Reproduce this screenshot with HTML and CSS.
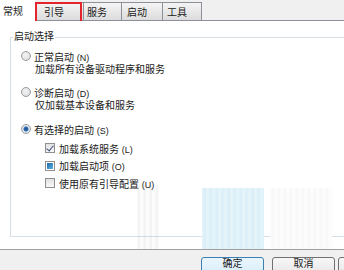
FILE: index.html
```html
<!DOCTYPE html>
<html lang="zh-CN">
<head>
    <meta charset="UTF-8">
    <title>系统配置</title>
    <link rel="stylesheet" href="styles.css">
</head>
<body>
    <div class="dialog">
        <div class="tabs">
            <div class="tab active">常规</div>
            <div class="tab marked">引导</div>
            <div class="tab w-services">服务</div>
            <div class="tab w-startup">启动</div>
            <div class="tab w-tools">工具</div>
        </div>

        <div class="panel">
            <fieldset class="group">
                <legend>启动选择</legend>

                <div class="option first">
                    <span class="radio"></span>
                    <span>正常启动 <span class="key">(N)</span></span>
                </div>
                <div class="desc">加载所有设备驱动程序和服务</div>

                <div class="option second">
                    <span class="radio"></span>
                    <span>诊断启动 <span class="key">(D)</span></span>
                </div>
                <div class="desc">仅加载基本设备和服务</div>

                <div class="option third">
                    <span class="radio checked"></span>
                    <span>有选择的启动 <span class="key">(S)</span></span>
                </div>

                <div class="sub">
                    <div class="check-row">
                        <span class="check ticked"></span>
                        <span>加载系统服务 <span class="key">(L)</span></span>
                    </div>
                    <div class="check-row">
                        <span class="check filled"></span>
                        <span>加载启动项 <span class="key">(O)</span></span>
                    </div>
                    <div class="check-row">
                        <span class="check"></span>
                        <span>使用原有引导配置 <span class="key">(U)</span></span>
                    </div>
                </div>
            </fieldset>

            <!-- полосы от растянутого скриншота -->
            <div class="smear smear-gray"></div>
            <div class="smear smear-blue"></div>
            <div class="smear smear-white"></div>
        </div>

        <div class="footer">
            <button class="btn default">确定</button>
            <button class="btn">取消</button>
            <button class="btn stub"></button>
        </div>
    </div>
</body>
</html>
```

FILE: styles.css
```css
html, body {
    margin: 0;
    padding: 0;
}
body {
    width: 344px;
    height: 270px;
    overflow: hidden;
    background: #f0f0f0;
    font-family: "Liberation Sans", "Noto Sans CJK SC", sans-serif;
    font-size: 10px;
    color: #1a1a1a;
}
.dialog {
    display: flex;
    flex-direction: column;
    width: 344px;
}
.tabs {
    display: flex;
    align-items: flex-end;
    height: 20px;
    border-bottom: 1px solid #8d9099;
    background: #f0f0f0;
}
.tab {
    box-sizing: border-box;
    height: 18px;
    padding: 4px 0 0 5px;
    line-height: 12px;
    border: 1px solid #8d9099;
    border-bottom: none;
    border-left: none;
    background: linear-gradient(#f4f4f4, #dcdcdc);
}
.tab.active {
    width: 35px;
    height: 21px;
    margin-bottom: -1px;
    padding: 6px 0 0 3px;
    background: #fff;
    border: none;
}
.tab.marked {
    position: relative;
    width: 48px;
    padding-left: 7px;
    border-left: 1px solid #8d9099;
    margin-left: 1px;
}
.tab.marked::after {
    content: "";
    position: absolute;
    left: -2px;
    top: -1px;
    width: 43px;
    height: 20px;
    border: 2px solid #e3242b;
}
.w-services { width: 38px; padding-left: 3px; }
.w-startup { width: 41px; padding-left: 5px; }
.w-tools { width: 39px; padding-left: 4px; }

.panel {
    position: relative;
    height: 228px;
    background: #fff;
    border-bottom: 1px solid #a0a0a0;
    overflow: hidden;
}
.group {
    margin: 10px 0 0 10px;
    padding: 0;
    width: 340px;
    height: 206px;
    box-sizing: border-box;
    border: 1px solid #d5dfe5;
    border-right: none;
    min-width: 0;
}
.group legend {
    margin-left: 2px;
    padding: 0 1px;
    line-height: 12px;
    font-size: 10px;
}
.option {
    display: flex;
    align-items: center;
    gap: 3px;
    height: 14px;
    margin-left: 10px;
}
.option.first { margin-top: 6px; }
.option.second { margin-top: 8px; }
.option.third { margin-top: 9px; }
.desc {
    height: 14px;
    line-height: 14px;
    margin-left: 24px;
}
.key {
    font-size: 9px;
}
.radio {
    box-sizing: border-box;
    width: 10px;
    height: 10px;
    border-radius: 50%;
    border: 1px solid #9a9c9e;
    background: radial-gradient(circle at 40% 40%, #f4f4f4, #d6d8da);
}
.radio.checked {
    background: radial-gradient(circle, #1c4c86 0, #2c6cb2 2px, #dfe6ee 3px, #e8eaec 5px);
}
.sub {
    margin: 5px 0 0 34px;
}
.check-row {
    display: flex;
    align-items: center;
    gap: 4px;
    height: 14px;
    margin-bottom: 3.5px;
}
.check {
    box-sizing: border-box;
    position: relative;
    width: 10px;
    height: 10px;
    border: 1px solid #8f8f8f;
    background: linear-gradient(#e2e2e2, #f8f8f8);
}
.check.ticked::after {
    content: "";
    position: absolute;
    left: 2px;
    top: 0;
    width: 3px;
    height: 6px;
    border: solid #3a4f7a;
    border-width: 0 1.5px 1.5px 0;
    transform: rotate(40deg);
}
.check.filled {
    background: #fff;
}
.check.filled::after {
    content: "";
    position: absolute;
    left: 1px;
    top: 1px;
    width: 6px;
    height: 6px;
    background: linear-gradient(135deg, #1c67a8, #5ab4e0);
}

.smear {
    position: absolute;
    bottom: 0;
}
.smear-gray {
    top: 164px;
    left: 137px;
    width: 22px;
    background: repeating-linear-gradient(90deg, rgba(0,0,0,0.01) 0, rgba(0,0,0,0.06) 2px, rgba(255,255,255,0) 4px, rgba(0,0,0,0.03) 6px);
}
.smear-blue {
    top: 167px;
    left: 202px;
    width: 62px;
    background: repeating-linear-gradient(90deg, #e6f4fa 0, #d8eef7 3px, #eaf6fb 6px);
}
.smear-white {
    top: 167px;
    left: 270px;
    width: 62px;
    background: repeating-linear-gradient(90deg, #fdfdfd 0, #f7f7f7 3px, #fefefe 6px);
}

.footer {
    display: flex;
    gap: 8px;
    padding: 7px 0 0 201px;
    height: 13px;
}
.btn {
    flex: none;
    box-sizing: border-box;
    width: 63px;
    height: 22px;
    padding: 0;
    align-self: flex-start;
    font-family: "Liberation Sans", "Noto Sans CJK SC", sans-serif;
    font-size: 10px;
    line-height: 10px;
    color: #1a1a1a;
    border: 1px solid #707070;
    border-radius: 3px;
    background: linear-gradient(#f6f6f6, #e4e4e4);
    display: flex;
    justify-content: center;
    align-items: flex-start;
    padding-top: 1px;
}
.btn.default {
    border-color: #3c7fb1;
    background: linear-gradient(#eaf6fd, #d5ecf9);
}
.btn.stub {
    margin-left: -5px;
}
```
